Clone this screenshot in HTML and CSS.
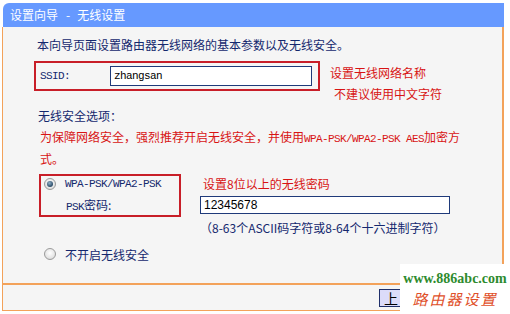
FILE: index.html
```html
<!DOCTYPE html>
<html lang="zh-CN">
<head>
<meta charset="utf-8">
<title>设置向导 - 无线设置</title>
<link rel="stylesheet" href="styles.css">
</head>
<body>
<div class="page">
  <div class="header">设置向导<span class="dash">-</span>无线设置</div>
  <div class="main">
    <div class="intro">本向导页面设置路由器无线网络的基本参数以及无线安全。</div>
    <div class="row1">
      <div class="box1">
        <span class="label en">SSID:</span>
        <div class="input ssid">zhangsan</div>
      </div>
      <div class="notes">
        <div class="note">设置无线网络名称</div>
        <div class="note note2">不建议使用中文字符</div>
      </div>
    </div>
    <div class="section">无线安全选项：</div>
    <div class="warn">为保障网络安全，强烈推荐开启无线安全，并使用<span class="en">WPA-PSK/WPA2-PSK AES</span>加密方<br>式。</div>
    <div class="row2">
      <div class="box2">
        <div class="opt"><span class="radio checked"></span><span class="opt-text en">WPA-PSK/WPA2-PSK</span></div>
        <div class="psk"><span class="en">PSK</span>密码:</div>
      </div>
      <div class="pwcol">
        <div class="pwnote">设置8位以上的无线密码</div>
        <div class="input pw">12345678</div>
        <div class="hint">（8-63个ASCII码字符或8-64个十六进制字符）</div>
      </div>
    </div>
    <div class="opt off"><span class="radio"></span><span class="opt-text">不开启无线安全</span></div>
  </div>
  <div class="footer">
    <span class="btn">上</span>
  </div>
</div>
<div class="mark">
  <div class="mark-url">www.886abc.com</div>
  <div class="mark-cn">路由器设置</div>
</div>
</body>
</html>
```
FILE: styles.css
```css
html, body {
  margin: 0;
  padding: 0;
  background: #ffffff;
}
body {
  width: 510px;
  height: 314px;
  overflow: hidden;
  position: relative;
  font-family: "Noto Sans CJK SC", "Liberation Sans", sans-serif;
  font-size: 12px;
  color: #14286e;
}
.page {
  width: 502px;
  margin: 3px 0 0 2px;
}
.header {
  height: 24px;
  line-height: 24px;
  background: #6699ff;
  border-top-left-radius: 6px;
  color: #ffffff;
  padding-left: 7px;
  font-size: 12px;
  margin-left: 1px;
}
.dash {
  display: inline-block;
  margin: 0 7px 0 8px;
}
.main {
  box-sizing: border-box;
  height: 256px;
  background: #f5f5f5;
  border-left: 1px solid #f3a25a;
  border-right: 2px solid #f3a25a;
  padding: 11px 0 0 32px;
}
.en {
  font-family: "Liberation Mono", monospace;
  font-size: 11px;
  letter-spacing: -0.6px;
}
.intro {
  line-height: 14px;
  margin-left: 2px;
}
.row1 {
  display: flex;
  margin-top: 9px;
  margin-left: -1px;
  height: 43px;
}
.box1 {
  box-sizing: border-box;
  width: 286px;
  height: 30px;
  border: 2px solid #c81e28;
  display: flex;
  align-items: center;
  padding-left: 4px;
}
.label {
  width: 70px;
  color: #14286e;
}
.input {
  box-sizing: border-box;
  background: #ffffff;
  border: 1px solid #1f3a7a;
  color: #000000;
  display: flex;
  align-items: center;
}
.ssid {
  width: 202px;
  height: 20px;
  padding-left: 3px;
  font-family: "Liberation Mono", monospace;
  font-size: 11px;
  letter-spacing: -0.6px;
}
.notes {
  margin-left: 10px;
  padding-top: 1px;
  color: #d81414;
  font-size: 12px;
}
.note {
  line-height: 21px;
}
.note2 {
  padding-left: 4px;
}
.section {
  margin-top: 5px;
  margin-left: 3px;
  line-height: 14px;
}
.warn {
  margin-top: 4px;
  margin-left: 5px;
  line-height: 20px;
  color: #d81414;
}
.row2 {
  display: flex;
  margin-top: 5px;
}
.box2 {
  box-sizing: border-box;
  width: 142px;
  height: 43px;
  margin-left: 4px;
  border: 2px solid #c81e28;
  padding-left: 3px;
}
.opt {
  display: flex;
  align-items: center;
  height: 16px;
}
.radio {
  box-sizing: border-box;
  width: 12px;
  height: 12px;
  border-radius: 50%;
  border: 1px solid #9a9a9a;
  background: radial-gradient(circle at 50% 40%, #ffffff 0%, #e6e6e6 60%, #cfcfcf 100%);
  display: flex;
  align-items: center;
  justify-content: center;
  flex: none;
}
.radio.checked::after {
  content: "";
  width: 6px;
  height: 6px;
  border-radius: 50%;
  background: radial-gradient(circle at 40% 35%, #8fb0c8 0%, #2a4a66 70%);
}
.opt-text {
  margin-left: 9px;
}
.psk {
  margin-top: 5px;
  padding-left: 22px;
  line-height: 16px;
}
.pwcol {
  margin-left: 19px;
  padding-top: 2px;
}
.pwnote {
  color: #d81414;
  padding-left: 3px;
  line-height: 16px;
}
.pw {
  margin-top: 4px;
  width: 250px;
  height: 18px;
  padding-left: 3px;
  font-family: "Liberation Sans", sans-serif;
  font-size: 12px;
}
.hint {
  margin-top: 6px;
  line-height: 16px;
  padding-left: 0;
}
.opt.off {
  margin-top: 10px;
  margin-left: 9px;
}
.footer {
  box-sizing: border-box;
  height: 28px;
  background: #f5f5f5;
  border: 1px solid #f3a25a;
  border-right-width: 2px;
  border-top: 2px solid #f3a25a;
  display: flex;
  align-items: center;
  padding-left: 376px;
}
.btn {
  box-sizing: border-box;
  width: 40px;
  height: 18px;
  padding-left: 4px;
  border: 1px solid #1f2f6a;
  background: #dcdcfa;
  color: #000000;
  font-size: 14px;
  line-height: 16px;
}
.mark {
  position: absolute;
  left: 400px;
  top: 264px;
  width: 110px;
  height: 50px;
  background: #ffffff;
  text-align: center;
}
.mark-url {
  margin-top: 7px;
  font-family: "Liberation Serif", serif;
  font-weight: bold;
  font-size: 14px;
  line-height: 16px;
  color: #2e8b2e;
}
.mark-cn {
  margin-top: 3px;
  font-family: "Noto Sans CJK SC", sans-serif;
  font-size: 15px;
  line-height: 18px;
  letter-spacing: 2px;
  color: #e0502a;
  font-style: italic;
}
```
